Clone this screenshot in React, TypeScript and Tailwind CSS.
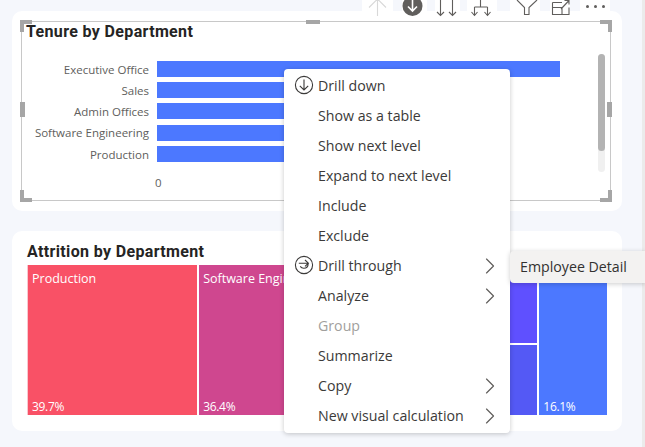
import { ChevronRight } from 'lucide-react';

const departments = [
    { name: 'Executive Office', width: 'w-[403px]' },
    { name: 'Sales', width: 'w-[330px]' },
    { name: 'Admin Offices', width: 'w-[300px]' },
    { name: 'Software Engineering', width: 'w-[280px]' },
    { name: 'Production', width: 'w-[260px]' },
];

const menuItems = [
    { label: 'Drill down', icon: 'down' },
    { label: 'Show as a table' },
    { label: 'Show next level' },
    { label: 'Expand to next level' },
    { label: 'Include' },
    { label: 'Exclude' },
    { label: 'Drill through', icon: 'through', sub: true },
    { label: 'Analyze', sub: true },
    { label: 'Group', disabled: true },
    { label: 'Summarize' },
    { label: 'Copy', sub: true },
    { label: 'New visual calculation', sub: true },
];

function CircleIcon({ kind }: { kind: string }) {
    return (
        <svg width="20" height="20" viewBox="0 0 20 20" fill="none" stroke="#3b3a39" strokeWidth="1.1" className="-mt-[2px]">
            <circle cx="10" cy="10" r="8.6" />
            {kind === 'down' ? (
                <path d="M10 4.500V15M5.800 10.800 10 15l4.200-4.200" />
            ) : (
                <path d="M4.800 8.200h9.400M11 5l3.400 3.200-3.400 3.200M14.200 8.200c0 3-1.800 5-4.400 5-1.600 0-2.800-.7-3.600-1.800" />
            )}
        </svg>
    );
}

// each toolbar icon is drawn in page coordinates, the viewBox picks out its button
function ToolButton({ x, w, children }: { x: number; w: number; children: React.ReactNode }) {
    return (
        <div className="h-[18px] bg-white" style={{ width: w }}>
            <svg width={w} height="18" viewBox={`${x} 0 ${w} 18`} fill="none" stroke="#605e5c" strokeWidth="1.1">
                {children}
            </svg>
        </div>
    );
}

function Toolbar() {
    return (
        <div className="absolute left-[362px] top-0 flex h-[18px] w-[248px]">
            <ToolButton x={362} w={31}>
                <path d="M377.500 0V16M369 7.500l8.500-8.500 8.500 8.500" stroke="#d8d8d8" />
            </ToolButton>
            <div className="ml-[9px]">
                <ToolButton x={402} w={25}>
                    <circle cx="412.500" cy="6" r="10" fill="#605e5c" stroke="none" />
                    <path d="M412.500 0v11M408 6.500l4.500 4.500 4.500-4.500" stroke="#fff" strokeWidth="1.600" />
                </ToolButton>
            </div>
            <div className="ml-[8px]">
                <ToolButton x={435} w={25}>
                    <path d="M440.500 0v15.500M437 12l3.500 3.500 3.500-3.500M452.500 0v15.500M449 12l3.500 3.500 3.500-3.500" />
                </ToolButton>
            </div>
            <div className="ml-[7px]">
                <ToolButton x={467} w={30}>
                    <path d="M480.500 0v7M474.500 7h13M474.500 7v8.500M487.500 7v8.500M471.500 12l3 3.500 3-3.500M484.500 12l3 3.500 3-3.500" />
                </ToolButton>
            </div>
            <div className="ml-[13px]">
                <ToolButton x={510} w={30}>
                    <path d="M517 0l7.500 7.500v7h4.500v-7L537 0" />
                </ToolButton>
            </div>
            <div className="ml-[10px]">
                <ToolButton x={550} w={20}>
                    <path d="M552.500 2.500v12h16.500V7.500M552.500 7.500h9.500v7M562 2.500h-9.500M561 9l8-8.500M564.500.5h4.500v4" />
                </ToolButton>
            </div>
            <div className="ml-[10px] flex h-[12px] w-[30px] items-center justify-center gap-[5px] bg-white">
                <span className="h-[3px] w-[3px] rounded-full bg-[#605e5c]" />
                <span className="h-[3px] w-[3px] rounded-full bg-[#605e5c]" />
                <span className="h-[3px] w-[3px] rounded-full bg-[#605e5c]" />
            </div>
        </div>
    );
}

function SelectionFrame() {
    return (
        <div className="pointer-events-none absolute left-[21px] top-[21px] h-[180px] w-[590px] border border-[#c8c8c8]">
            <svg width="594" height="184" viewBox="0 0 594 184" fill="#a6a6a6" className="absolute -left-[3px] -top-[3px]">
                <path d="M1 1h12v4H5v8H1zM593 1h-12v4h8v8h4zM1 183h12v-4H5v-8H1zM593 183h-12v-4h8v-8h4z" />
                <path d="M1 83h5v15H1zM588 83h5v15h-5zM287 1h14v4h-14z" />
            </svg>
        </div>
    );
}

export default function App() {
    return (
        <div className="relative h-[447px] w-[645px] overflow-hidden bg-[#f5f7fc] pl-[12px] pt-[11px] font-['Open_Sans',sans-serif]">
            <div className="relative h-[200px] w-[610px] rounded-[10px] bg-white pl-[14px] pt-[10px]">
                <h2 className="font-['Roboto',sans-serif] text-[16px] leading-[22px] font-bold tracking-[0.35px] text-[#252423]">Tenure by Department</h2>
                <div className="mt-[18px] flex flex-col gap-[5.200px]">
                    {departments.map((d) => (
                        <div key={d.name} className="flex h-[16px] items-center">
                            <span className="w-[123px] pt-[1px] text-right text-[11.500px] whitespace-nowrap text-[#605e5c]">{d.name}</span>
                            <div className={`ml-[8px] h-[16px] bg-[#4c78ff] ${d.width}`} />
                        </div>
                    ))}
                </div>
                <div className="mt-[13px] ml-[129px] text-[11.500px] leading-[16px] text-[#605e5c]">0</div>
                <div className="absolute top-[43px] right-[17px] h-[118px] w-[7px] rounded-full bg-[#f0f0f0]">
                    <div className="h-[97px] rounded-full bg-[#b3b3b3]" />
                </div>
            </div>

            <div className="mt-[20px] h-[200px] w-[610px] rounded-[10px] bg-white px-[15px] pt-[10px]">
                <h2 className="font-['Roboto',sans-serif] text-[16px] leading-[22px] font-bold tracking-[0.35px] text-[#252423]">Attrition by Department</h2>
                <div className="mt-[2px] flex h-[150px] w-[580px] gap-[2px] border-l border-[#f8c8d0] text-[12.500px] text-white">
                    <div className="flex w-[170px] flex-col justify-between bg-[#f95166] px-[4px] pt-[5px]">
                        <span>Production</span>
                        <span className="text-[12px] leading-[16px] tracking-[-0.3px]">39.7%</span>
                    </div>
                    <div className="flex w-[140px] flex-col justify-between bg-[#cf478f] px-[4px] pt-[5px] whitespace-nowrap">
                        <span>Software Engineering</span>
                        <span className="text-[12px] leading-[16px] tracking-[-0.3px]">36.4%</span>
                    </div>
                    <div className="flex w-[198px] flex-col gap-[2px]">
                        <div className="h-[78px] bg-[#5f50ff]" />
                        <div className="flex-1 bg-[#5459f5]" />
                    </div>
                    <div className="flex w-[68px] flex-col justify-end bg-[#4c78ff] px-[4px]">
                        <span className="text-[12px] leading-[16px] tracking-[-0.3px]">16.1%</span>
                    </div>
                </div>
            </div>

            <Toolbar />
            <SelectionFrame />
            <div className="absolute top-0 right-0 h-full w-[3px] bg-[#ebebeb]" />

            <div className="absolute left-[284px] top-[69px] w-[226px] rounded-[4px] bg-white pt-[2px] pb-[2px] text-[14.200px] text-[#3b3a39] shadow-[0_1px_5px_rgba(0,0,0,0.22)]">
                {menuItems.map((item) => (
                    <div key={item.label} className={`flex h-[30px] items-center ${item.disabled ? 'text-[#a19f9d]' : ''}`}>
                        <span className="flex w-[34px] justify-end pr-[4px]">
                            {item.icon && <CircleIcon kind={item.icon} />}
                        </span>
                        <span className="flex-1 whitespace-nowrap">{item.label}</span>
                        {item.sub && <ChevronRight size={28} strokeWidth={1} className="mr-[6px] text-[#605e5c]" />}
                    </div>
                ))}
            </div>

            <div className="absolute left-[510px] top-[251px] flex h-[32px] w-[135px] items-center rounded-l-[4px] bg-[#f3f2f1] pb-[1px] pl-[10px] text-[14.200px] text-[#323130] shadow-[0_1px_5px_rgba(0,0,0,0.2)]">
                Employee Detail
            </div>
        </div>
    );
}
